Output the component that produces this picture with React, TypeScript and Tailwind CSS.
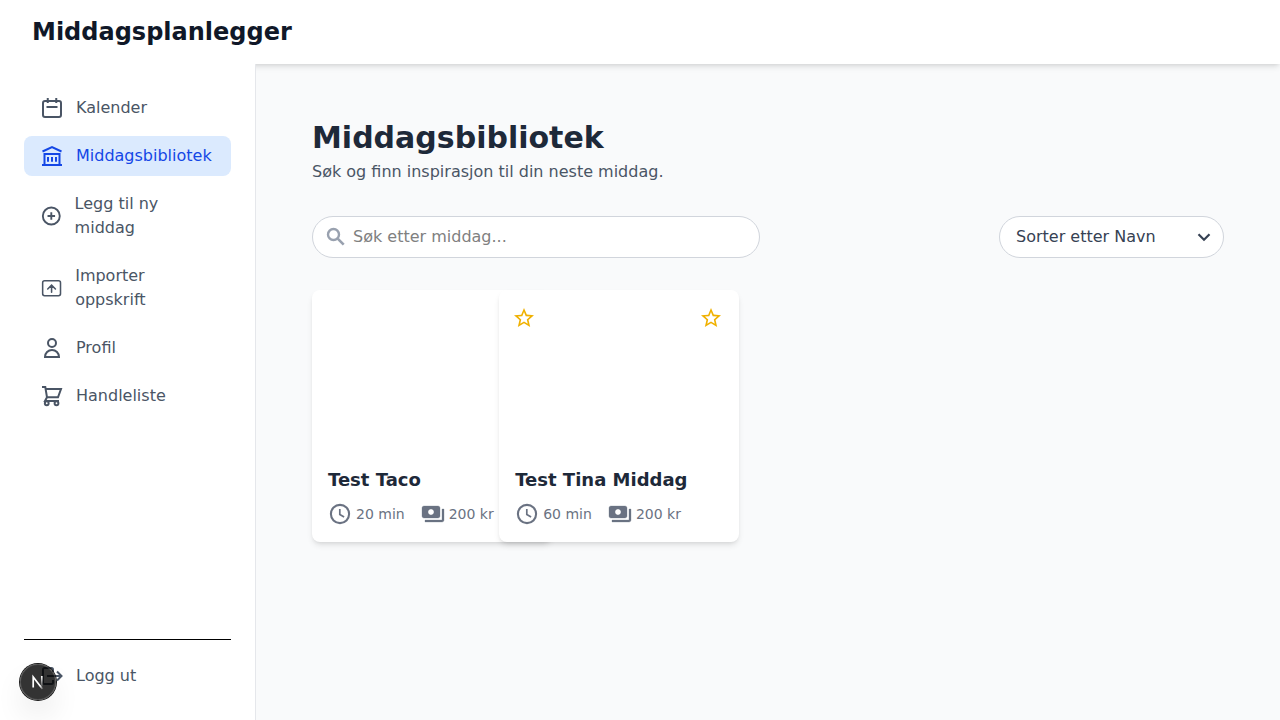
import type { ReactNode } from "react";
import { MdStarBorder } from "react-icons/md";

function Icon({ children, width = 2 }: { children: ReactNode; width?: number }) {
  return (
    <svg
      className="h-6 w-6"
      viewBox="0 0 24 24"
      fill="none"
      stroke="currentColor"
      strokeWidth={width}
      aria-hidden="true"
    >
      {children}
    </svg>
  );
}

function ClockIcon() {
  return (
    <Icon width={2.1}>
      <circle cx="12" cy="12" r="9.100" />
      <path d="M11.800 7v5.400l4.300 2.600" strokeWidth="1.700" />
    </Icon>
  );
}

function CashIcon() {
  return (
    <Icon>
      <path
        d="M19 14V6c0-1.100-.9-2-2-2H3c-1.100 0-2 .9-2 2v8c0 1.100.9 2 2 2h14c1.100 0 2-.9 2-2zm-9-1c-1.660 0-3-1.340-3-3s1.340-3 3-3 3 1.340 3 3-1.340 3-3 3zm13-6v11c0 1.100-.9 2-2 2H4v-2h17V7h2z"
        fill="currentColor"
        strokeWidth="0.300"
      />
    </Icon>
  );
}

function SearchIcon() {
  return (
    <Icon width={2.4}>
      <circle cx="9.500" cy="9.500" r="5.500" />
      <path d="M13.700 13.700l6 6" strokeWidth="2.600" />
    </Icon>
  );
}

const links = [
  {
    label: "Kalender",
    icon: (
      <Icon>
        <rect x="3" y="5" width="18" height="16" rx="2" />
        <path d="M7.750 2v5M16.250 2v5M6.500 11h11" />
      </Icon>
    ),
  },
  {
    label: "Middagsbibliotek",
    active: true,
    icon: (
      <Icon>
        <path d="M2.500 7.500 12 3.200l9.500 4.300M3.500 10h17M4.500 10v11M19.500 10v11M2 21h20M8 13v4.700M12 13v4.700M16 13v4.700" />
      </Icon>
    ),
  },
  {
    label: "Legg til ny middag",
    icon: (
      <Icon>
        <circle cx="12" cy="12" r="9" />
        <path d="M12 8v8M8 12h8" />
      </Icon>
    ),
  },
  {
    label: "Importer oppskrift",
    icon: (
      <Icon width={1.6}>
        <rect x="2.750" y="4.500" width="18.500" height="15.500" rx="2" />
        <path d="M12 16.500V9.500M8 13l4-4 4 4" strokeLinecap="round" />
      </Icon>
    ),
  },
  {
    label: "Profil",
    icon: (
      <Icon>
        <circle cx="12" cy="7" r="4" />
        <path d="M5 21a7 7 0 0 1 14 0z" />
      </Icon>
    ),
  },
  {
    label: "Handleliste",
    icon: (
      <Icon>
        <path d="M2 3h3.300L7 13.300h11L21 5H6M7 13.300 5 17h14" />
        <circle cx="6.750" cy="19.250" r="1.900" />
        <circle cx="16.500" cy="19.250" r="1.900" />
      </Icon>
    ),
  },
];

const dinners = [
  { name: "Test Taco", minutes: 20, price: 200 },
  { name: "Test Tina Middag", minutes: 60, price: 200 },
];

function Sidebar() {
  return (
    <aside className="z-10 flex w-64 shrink-0 flex-col justify-between border-r border-gray-200 bg-white p-6">
      <nav className="flex flex-col gap-2">
        {links.map((link) => (
          <a
            key={link.label}
            href="#"
            className={
              link.active
                ? "flex items-center gap-3 rounded-lg bg-blue-100 px-4 py-2 text-[#1447e6]"
                : "flex items-center gap-3 rounded-lg px-4 py-2 text-gray-600"
            }
          >
            {link.icon}
            <span>{link.label}</span>
          </a>
        ))}
      </nav>
      <div className="border-t border-black pt-4">
        <button type="button" className="flex w-full items-center gap-3 rounded-lg px-4 py-2 text-gray-600">
          <Icon>
            <path d="M13 8V5.500A1.500 1.500 0 0 0 11.500 4h-7A1.500 1.500 0 0 0 3 5.500v13A1.500 1.500 0 0 0 4.500 20h7a1.500 1.500 0 0 0 1.500-1.500V16M7 12h14M17 7.500l4.500 4.500-4.500 4.500" />
          </Icon>
          <span>Logg ut</span>
        </button>
      </div>
    </aside>
  );
}

function DinnerCard({ name, minutes, price }: { name: string; minutes: number; price: number }) {
  return (
    <article className="relative w-60 rounded-lg bg-white shadow-md">
      <div className="h-40" />
      <button type="button" aria-label={`Favoritt: ${name}`} className="absolute top-4 right-4 z-10 text-[#f0b100]">
        <MdStarBorder size={24} />
      </button>
      <div className="p-4">
        <h2 className="text-lg font-bold text-gray-800">{name}</h2>
        <div className="mt-2 flex items-center gap-4 text-sm text-gray-500">
          <span className="flex items-center gap-1">
            <ClockIcon />
            {minutes} min
          </span>
          <span className="flex items-center gap-1">
            <CashIcon />
            {price} kr
          </span>
        </div>
      </div>
    </article>
  );
}

export default function App() {
  return (
    <div className="flex h-screen flex-col bg-gray-50 font-['DejaVu_Sans',sans-serif]">
      <header className="flex h-16 shrink-0 items-center bg-white px-8 shadow-md">
        <span className="text-2xl font-bold text-gray-900">Middagsplanlegger</span>
      </header>
      <div className="flex min-h-0 flex-1">
        <Sidebar />
        <main className="min-w-0 flex-1 overflow-y-auto p-14">
          <h1 className="text-3xl font-bold text-gray-800">Middagsbibliotek</h1>
          <p className="mt-1 text-gray-600">Søk og finn inspirasjon til din neste middag.</p>
          <div className="mt-8 flex items-center justify-between gap-4">
            <div className="relative w-full max-w-md">
              <span className="pointer-events-none absolute inset-y-0 left-3 flex items-center text-gray-400">
                <SearchIcon />
              </span>
              <input
                type="text"
                aria-label="Søk etter middag"
                placeholder="Søk etter middag..."
                className="w-full rounded-full border border-gray-300 bg-white py-2 pr-4 pl-10 placeholder:text-[#808080]"
              />
            </div>
            <div className="relative">
              <select
                aria-label="Sortering"
                className="w-[225px] appearance-none rounded-full border border-gray-300 bg-white py-2 pr-10 pl-4 text-gray-700"
              >
                <option>Sorter etter Navn</option>
                <option>Sorter etter Tid</option>
                <option>Sorter etter Pris</option>
              </select>
              <span className="pointer-events-none absolute inset-y-0 right-3 flex items-center text-gray-700">
                <svg
                  className="h-4 w-4"
                  viewBox="0 0 16 16"
                  fill="none"
                  stroke="currentColor"
                  strokeWidth="2.200"
                  aria-hidden="true"
                >
                  <path d="M2.500 5.200 8 10.700l5.500-5.500" />
                </svg>
              </span>
            </div>
          </div>
          <section className="mt-8 grid grid-cols-5 gap-6">
            {dinners.map((dinner) => (
              <DinnerCard key={dinner.name} {...dinner} />
            ))}
          </section>
        </main>
      </div>
      <button
        type="button"
        aria-label="Utviklerverktøy"
        className="fixed bottom-5 left-5 z-20 h-9 w-9 rounded-full bg-black/80 shadow-[0_0_0_1px_#171717,inset_0_0_0_1px_rgba(255,255,255,0.14),0_16px_32px_-8px_rgba(0,0,0,0.24)]"
      >
        <svg className="h-9 w-9" viewBox="0 0 36 36" fill="none" strokeWidth="1.700" aria-hidden="true">
          <defs>
            <linearGradient id="diagonal" x1="15" y1="16" x2="24" y2="25" gradientUnits="userSpaceOnUse">
              <stop offset="0.600" stopColor="white" />
              <stop offset="1" stopColor="white" stopOpacity="0" />
            </linearGradient>
            <linearGradient id="upright" x1="22" y1="12" x2="22" y2="24" gradientUnits="userSpaceOnUse">
              <stop stopColor="white" />
              <stop offset="1" stopColor="white" stopOpacity="0" />
            </linearGradient>
          </defs>
          <path d="M22.500 25 13.200 13v10.500" stroke="url(#diagonal)" />
          <path d="M21.800 12v10.500" stroke="url(#upright)" />
        </svg>
      </button>
    </div>
  );
}
